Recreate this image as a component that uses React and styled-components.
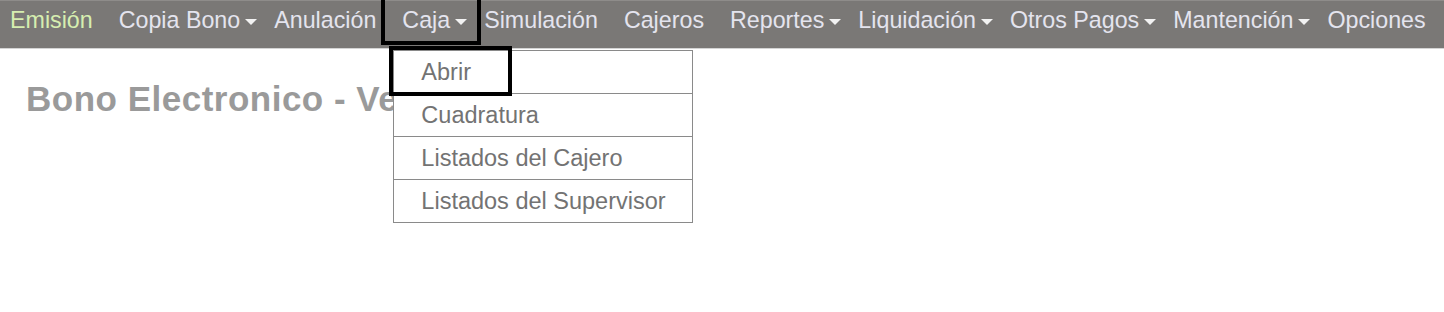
import React from "react";
import styled, { createGlobalStyle } from "styled-components";

const Global = createGlobalStyle`
  html, body { margin: 0; padding: 0; background: #fff; height: 100%; }
  body { font-family: "Liberation Sans", Arial, sans-serif; }
  #root { min-height: 312px; }
`;

const Bar = styled.nav`
  height: 47px;
  background: #7a7876;
  border-top: 1px solid #8e8c8a;
  border-bottom: 1px solid #d4d4d4;
  display: flex;
  align-items: flex-start;
`;

const Item = styled.div`
  position: relative;
  height: 47px;
  box-sizing: border-box;
  padding: 6px ${(p) => (p.$drop ? "4px" : "13px")} 0 ${(p) => (p.$first ? "10px" : "13px")};
  display: flex;
  align-items: flex-start;
  font-size: 23.25px;
  line-height: 26px;
  color: ${(p) => (p.$active ? "#d6eeb0" : "#e4e4ee")};
  white-space: nowrap;
`;

const Caret = styled.span`
  display: inline-block;
  width: 0;
  height: 0;
  margin: 12px 0 0 5px;
  border-top: 6px solid #f2f2f2;
  border-left: 6px solid transparent;
  border-right: 6px solid transparent;
`;

const Highlight = styled.span`
  position: absolute;
  left: ${(p) => p.$l}px;
  right: ${(p) => p.$r}px;
  top: ${(p) => p.$t}px;
  bottom: ${(p) => p.$b}px;
  border: 4px solid #000;
  pointer-events: none;
  z-index: 3;
`;

const Menu = styled.ul`
  position: absolute;
  top: 49px;
  left: 4px;
  width: 298px;
  margin: 0;
  padding: 0;
  list-style: none;
  background: #fff;
  border: 1px solid #8a8a8a;
  z-index: 2;
`;

const MenuItem = styled.li`
  position: relative;
  padding: 8px 27px;
  font-size: 23.5px;
  line-height: 26px;
  color: #737373;
  white-space: nowrap;
  & + & { border-top: 1px solid #8a8a8a; }
`;

const Content = styled.main`
  padding: 30px 26px 0;
`;

const Title = styled.h1`
  margin: 0;
  font-size: 35px;
  line-height: 40px;
  letter-spacing: 0.5px;
  font-weight: bold;
  color: #9a9a9a;
`;

const items = [
  { t: "Emisión", active: true, first: true },
  { t: "Copia Bono", drop: true },
  { t: "Anulación" },
  { t: "Caja", drop: true, open: true },
  { t: "Simulación" },
  { t: "Cajeros" },
  { t: "Reportes", drop: true },
  { t: "Liquidación", drop: true },
  { t: "Otros Pagos", drop: true },
  { t: "Mantención", drop: true },
  { t: "Opciones" },
];

const menu = ["Abrir", "Cuadratura", "Listados del Cajero", "Listados del Supervisor"];

export default function App() {
  return (
    <>
      <Global />
      <Bar>
        {items.map((it) => (
          <Item key={it.t} $drop={it.drop} $active={it.active} $first={it.first}>
            {it.t}
            {it.drop && <Caret />}
            {it.open && (
              <>
                <Highlight $l={-8} $r={-10} $t={-5} $b={3} />
                <Menu>
                  {menu.map((m, i) => (
                    <MenuItem key={m}>
                      {m}
                      {i === 0 && <Highlight $l={-5} $r={180} $t={-5} $b={-3} />}
                    </MenuItem>
                  ))}
                </Menu>
              </>
            )}
          </Item>
        ))}
      </Bar>
      <Content>
        <Title>Bono Electronico - Versión 2.0</Title>
      </Content>
    </>
  );
}
